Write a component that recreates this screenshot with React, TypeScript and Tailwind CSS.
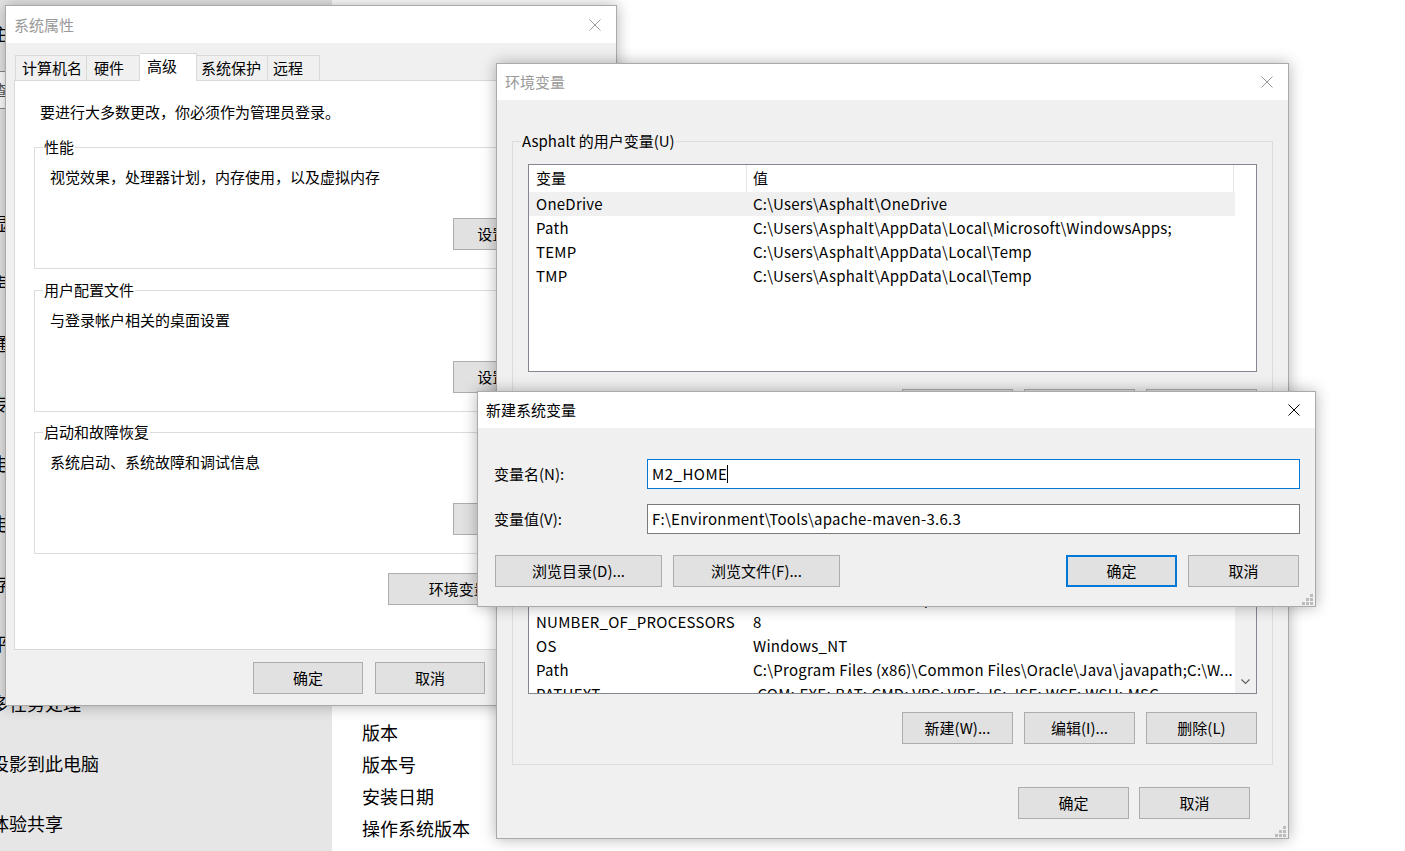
import React from 'react';

type Row = [string, string];

const userRows: Row[] = [
  ['OneDrive', 'C:\\Users\\Asphalt\\OneDrive'],
  ['Path', 'C:\\Users\\Asphalt\\AppData\\Local\\Microsoft\\WindowsApps;'],
  ['TEMP', 'C:\\Users\\Asphalt\\AppData\\Local\\Temp'],
  ['TMP', 'C:\\Users\\Asphalt\\AppData\\Local\\Temp'],
];

const sysRows: Row[] = [
  ['ComSpec', 'C:\\Windows\\system32\\cmd.exe'],
  ['DriverData', 'C:\\Windows\\System32\\Drivers\\DriverData'],
  ['JAVA_HOME', 'F:\\Environment\\Java\\jdk1.8.0_201'],
  ['MAVEN_HOME', 'F:\\Environment\\Tools\\apache-maven-3.6.3'],
  ['NUMBER_OF_PROCESSORS', '8'],
  ['OS', 'Windows_NT'],
  ['Path', 'C:\\Program Files (x86)\\Common Files\\Oracle\\Java\\javapath;C:\\W...'],
  ['PATHEXT', '.COM;.EXE;.BAT;.CMD;.VBS;.VBE;.JS;.JSE;.WSF;.WSH;.MSC'],
];

const sidebar = ['显示', '声音', '通知和操作', '专注助手', '电源和睡眠', '电池', '存储', '平板模式', '多任务处理', '投影到此电脑', '体验共享'];

function CloseX({ color }: { color: string }) {
  return (
    <svg width="12" height="12" viewBox="0 0 12 12">
      <path d="M0.5 0.5L11.5 11.5M11.5 0.5L0.5 11.5" stroke={color} strokeWidth="1" fill="none" />
    </svg>
  );
}

function Grip() {
  return (
    <svg width="11" height="11" viewBox="0 0 11 11" fill="#bcbcbc">
      <rect x="8" y="0" width="3" height="3" />
      <rect x="4" y="4" width="3" height="3" />
      <rect x="8" y="4" width="3" height="3" />
      <rect x="0" y="8" width="3" height="3" />
      <rect x="4" y="8" width="3" height="3" />
      <rect x="8" y="8" width="3" height="3" />
    </svg>
  );
}

function Btn({ label, w, primary }: { label: string; w: string; primary?: boolean }) {
  return (
    <div
      className={`flex items-center justify-center h-[32px] bg-[#e1e1e1] whitespace-nowrap overflow-hidden ${w} ${
        primary ? 'border-2 border-[#0078d7]' : 'border border-[#adadad]'
      }`}
    >
      {label}
    </div>
  );
}

function TitleBar({ title, active, h }: { title: string; active?: boolean; h: string }) {
  return (
    <div className={`flex items-center justify-between bg-white shrink-0 ${h}`}>
      <span className={`pl-[8px] leading-[20px] ${active ? 'text-black' : 'text-[#999999]'}`}>{title}</span>
      <div className="w-[42px] h-full flex items-center justify-center">
        <CloseX color={active ? '#000000' : '#9a9a9a'} />
      </div>
    </div>
  );
}

function Group({ label, className, children }: { label: string; className?: string; children: React.ReactNode }) {
  return (
    <fieldset className={`border border-[#dcdcdc] ${className ?? ''}`}>
      <legend className="ml-[8px] px-[1px] leading-[20px]">{label}</legend>
      {children}
    </fieldset>
  );
}

function SettingGroup({ label, text, className }: { label: string; text: string; className?: string }) {
  return (
    <Group label={label} className={className}>
      <div className="flex flex-col pl-[15px] pr-[24px] pt-[10px] pb-[18px]">
        <div className="leading-[20px] whitespace-nowrap">{text}</div>
        <div className="self-end mt-[31px]">
          <Btn label="设置(S)..." w="w-[110px]" />
        </div>
      </div>
    </Group>
  );
}

function VarList({ rows, selected, scroll }: { rows: Row[]; selected?: number; scroll?: boolean }) {
  return (
    <div className="flex h-[208px] border border-[#828790] bg-white overflow-hidden">
      <div className="w-[706px] shrink-0 flex flex-col">
        <div className="flex h-[27px] shrink-0 items-center">
          <div className="w-[218px] h-full flex items-center pl-[7px] border-r border-[#e5e5e5]">变量</div>
          <div className="w-[487px] h-full flex items-center pl-[6px] border-r border-[#e5e5e5]">值</div>
        </div>
        {rows.map(([k, v], i) => (
          <div
            key={k + i}
            className={`flex h-[24px] shrink-0 items-center tracking-[0.25px] ${i === selected ? 'bg-[#f0f0f0]' : ''}`}
          >
            <div className="w-[218px] pl-[7px] whitespace-nowrap overflow-hidden">{k}</div>
            <div className="w-[487px] pl-[6px] whitespace-nowrap overflow-hidden">{v}</div>
          </div>
        ))}
      </div>
      {scroll && (
        <div className="w-[21px] ml-auto bg-[#f0f0f0] flex flex-col justify-end">
          <div className="h-[22px] flex items-center justify-center">
            <svg width="9" height="6" viewBox="0 0 9 6">
              <path d="M0.5 0.5L4.5 4.5L8.5 0.5" stroke="#606060" strokeWidth="1.2" fill="none" />
            </svg>
          </div>
        </div>
      )}
    </div>
  );
}

export default function App() {
  return (
    <div className="relative w-[1405px] h-[851px] overflow-hidden flex text-black font-['Noto_Sans_CJK_SC','Noto_Sans',sans-serif] text-[15px]">
      {/* settings page behind */}
      <div className="w-[332px] shrink-0 bg-[#e6e6e6] flex flex-col text-[18px] leading-[22px]">
        <div className="mt-[22px] -ml-[9px] whitespace-nowrap">主页</div>
        <div className="mt-[27px] -ml-[20px] w-[300px] h-[38px] shrink-0 border border-[#8a8a8a] bg-white flex items-center pl-[12px] text-[15px] text-[#555555]">
          查找设置
        </div>
        <div className="mt-[84px] flex flex-col">
          {sidebar.map((s) => (
            <div key={s} className="h-[60px] flex items-center -ml-[9px] whitespace-nowrap">
              {s}
            </div>
          ))}
        </div>
      </div>
      <div className="flex-1 bg-white flex flex-col pl-[30px] pt-[716px] text-[18px] leading-[32px]">
        <div>版本</div>
        <div>版本号</div>
        <div>安装日期</div>
        <div>操作系统版本</div>
      </div>

      {/* 系统属性 */}
      <div className="absolute left-[5px] top-[5px] w-[612px] h-[701px] flex flex-col bg-[#f0f0f0] border border-[#aaaaaa] shadow-[0_0_14px_rgba(0,0,0,0.3)]">
        <TitleBar title="系统属性" h="h-[37px]" />
        <div className="flex flex-col px-[8px] pt-[10px]">
          <div className="flex items-end h-[27px] pl-[1px]">
            <div className="w-[72px] h-[25px] flex items-center pl-[6px] border-t border-l border-r border-[#d9d9d9]">计算机名</div>
            <div className="w-[53px] h-[25px] flex items-center pl-[7px] border-t border-r border-[#d9d9d9]">硬件</div>
            <div className="w-[57px] h-[28px] -mb-px relative z-10 flex items-center pl-[7px] pb-[3px] bg-white border-t border-r border-[#d9d9d9]">高级</div>
            <div className="w-[71px] h-[25px] flex items-center pl-[4px] border-t border-r border-[#d9d9d9]">系统保护</div>
            <div className="w-[52px] h-[25px] flex items-center pl-[5px] border-t border-r border-[#d9d9d9]">远程</div>
          </div>
          <div className="h-[570px] bg-white border border-[#d9d9d9] flex flex-col px-[19px]">
            <div className="pt-[21px] pl-[6px] leading-[20px]">要进行大多数更改，你必须作为管理员登录。</div>
            <SettingGroup className="mt-[15px]" label="性能" text="视觉效果，处理器计划，内存使用，以及虚拟内存" />
            <SettingGroup className="mt-[11px]" label="用户配置文件" text="与登录帐户相关的桌面设置" />
            <SettingGroup className="mt-[10px]" label="启动和故障恢复" text="系统启动、系统故障和调试信息" />
            <div className="flex justify-end mt-[19px] mr-[25px]">
              <Btn label="环境变量(N)..." w="w-[175px]" />
            </div>
          </div>
          <div className="flex justify-end gap-[12px] mt-[12px] pr-[1px]">
            <Btn label="确定" w="w-[110px]" />
            <Btn label="取消" w="w-[110px]" />
            <Btn label="应用(A)" w="w-[110px]" />
          </div>
        </div>
      </div>

      {/* 环境变量 */}
      <div className="absolute left-[496px] top-[63px] w-[793px] h-[776px] flex flex-col bg-[#f0f0f0] border border-[#aaaaaa] shadow-[0_0_14px_rgba(0,0,0,0.3)]">
        <TitleBar title="环境变量" h="h-[36px]" />
        <div className="flex flex-col px-[15px] pt-[31px]">
          <Group label="Asphalt 的用户变量(U)">
            <div className="flex flex-col px-[15px] pt-[13px] pb-[21px]">
              <VarList rows={userRows} selected={0} />
              <div className="flex justify-end gap-[11px] mt-[17px]">
                <Btn label="新建(N)..." w="w-[111px]" />
                <Btn label="编辑(E)..." w="w-[111px]" />
                <Btn label="删除(D)" w="w-[111px]" />
              </div>
            </div>
          </Group>
          <Group label="系统变量(S)" className="mt-[10px]">
            <div className="flex flex-col px-[15px] pt-[13px] pb-[20px]">
              <VarList rows={sysRows} scroll />
              <div className="flex justify-end gap-[11px] mt-[18px]">
                <Btn label="新建(W)..." w="w-[111px]" />
                <Btn label="编辑(I)..." w="w-[111px]" />
                <Btn label="删除(L)" w="w-[111px]" />
              </div>
            </div>
          </Group>
          <div className="flex justify-end gap-[10px] mt-[22px] mr-[23px]">
            <Btn label="确定" w="w-[111px]" />
            <Btn label="取消" w="w-[111px]" />
          </div>
        </div>
        <div className="absolute right-[2px] bottom-[1px]">
          <Grip />
        </div>
      </div>

      {/* 新建系统变量 */}
      <div className="absolute left-[477px] top-[391px] w-[839px] h-[216px] flex flex-col bg-[#f0f0f0] border border-[#aaaaaa] shadow-[0_0_14px_rgba(0,0,0,0.3)]">
        <TitleBar title="新建系统变量" active h="h-[36px]" />
        <div className="flex flex-col pl-[16px] pr-[15px] pt-[31px]">
          <div className="flex items-center h-[30px]">
            <div className="w-[153px] shrink-0">变量名(N):</div>
            <div className="flex-1 h-[30px] bg-white border border-[#0078d7] flex items-center pl-[4px] tracking-[0.5px]">
              <span>M2_HOME</span>
              <span className="inline-block w-px h-[18px] bg-black" />
            </div>
          </div>
          <div className="flex items-center h-[30px] mt-[15px]">
            <div className="w-[153px] shrink-0">变量值(V):</div>
            <div className="flex-1 h-[30px] bg-white border border-[#7a7a7a] flex items-center pl-[4px] tracking-[0.25px]">
              F:\Environment\Tools\apache-maven-3.6.3
            </div>
          </div>
          <div className="flex items-center mt-[21px] pl-[1px] pr-[1px]">
            <Btn label="浏览目录(D)..." w="w-[167px]" />
            <div className="ml-[11px]">
              <Btn label="浏览文件(F)..." w="w-[167px]" />
            </div>
            <div className="flex-1" />
            <Btn label="确定" w="w-[111px]" primary />
            <div className="ml-[11px]">
              <Btn label="取消" w="w-[111px]" />
            </div>
          </div>
        </div>
        <div className="absolute right-[2px] bottom-[1px]">
          <Grip />
        </div>
      </div>
    </div>
  );
}
